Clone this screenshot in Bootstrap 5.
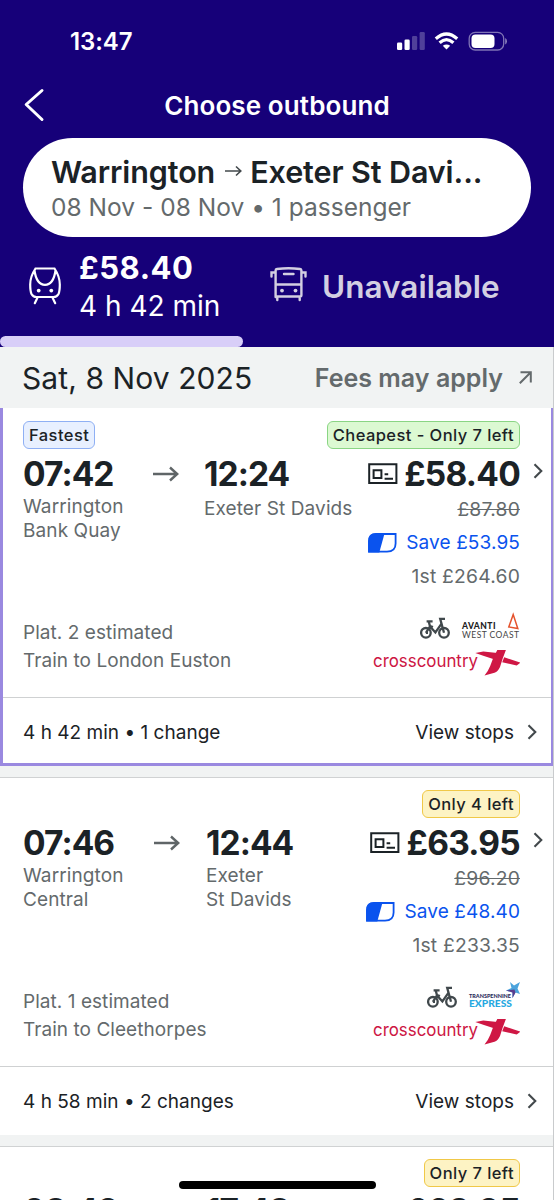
<!DOCTYPE html>
<html lang="en">
<head>
<meta charset="utf-8">
<meta name="viewport" content="width=device-width, initial-scale=1">
<title>Choose outbound</title>
<link href="https://cdn.jsdelivr.net/npm/bootstrap@5.3.0/dist/css/bootstrap.min.css" rel="stylesheet">
<style>
:root{--navy:#160079;--ink:#1b2226;--grey:#646a6c;--lilac:#9a89e0}
html,body{height:1200px;overflow:hidden}
body{font-family:Inter,"Liberation Sans",sans-serif;color:var(--ink);background:#f1f3f3;font-size:19px;line-height:24px;letter-spacing:.02px;white-space:nowrap}
svg{display:block;flex:none;overflow:visible}
.app{height:1200px;overflow:hidden}
.top{background:var(--navy);height:347px;color:#fff}
.status{height:82px;padding:1px 47px 0 70px}
.clock{font-size:24px;font-weight:600;letter-spacing:-.1px}
.titlebar{height:56px}
.titlebar h1{font-size:26px;font-weight:600;line-height:47px;letter-spacing:.1px}
.back{left:24px;top:7px}
.pill{margin:0 23px;height:99px;border-radius:50px;background:#fff;color:var(--ink);padding:15px 28px 0}
.route{font-size:30.5px;font-weight:600;line-height:38px;letter-spacing:-.1px}
.route svg{margin:-2px 8px 0 10px}
.when{font-size:24.5px;line-height:32px;color:var(--grey)}
.modes{height:99px}
.modeA{width:270px;padding:12px 0 0 28px}
.train{margin:18px 18px 0 1px}
.fare{font-size:31px;font-weight:700;line-height:38px;letter-spacing:.5px}
.dur{font-size:28px;line-height:38px;letter-spacing:0}
.modeB{padding-top:30px}
.bus{margin-right:15px}
.una{font-size:31.5px;line-height:40px;font-weight:600;color:#d3cfe2}
.tabline{height:11px;width:243px;border-radius:6px;background:#d8cef8}
.datebar{height:61px;padding:0 22px 0 22px;background:#f1f3f3}
.date{font-size:30px;line-height:62px;letter-spacing:.08px}
.fees{font-size:25px;font-weight:600;color:var(--grey)}
.trip{height:358px;margin-bottom:11px;background:#fff;border-top:1px solid #d0d2d3;padding-top:12px}
.trip.sel{border:3px solid var(--lilac);border-top:0;padding-top:13px}
.trip .inner{height:276px;padding-left:23px}
.trip.sel .inner{padding-left:20px;margin-right:-3px}
.tags{height:28px;padding-right:34px}
.tag{height:28px;border:1.5px solid;border-radius:6px;font-size:16.5px;font-weight:550;line-height:26px;padding:0 5px;letter-spacing:.43px}
.t-blue{background:#e8f0ff;border-color:#8fb0f4}
.t-green{background:#dcf9d2;border-color:#8ad584}
.t-yellow{background:#fdf3c4;border-color:#f0c848}
.hour{font-size:33.5px;font-weight:700;line-height:40px;letter-spacing:-.95px}
.mid{height:152px;padding-top:5px}
.next{padding-top:4px}
.place{padding-top:1px;letter-spacing:.1px}
.place.single{padding-top:3px}
.dep{width:130px}
.arw{width:51px}
.dep.late{width:131px}
.late + .arw{width:52px}
.g{color:var(--grey)}
.price{width:152px}
.price.wide{width:154px}
.price.wide .head{padding-left:4px}
.amt{letter-spacing:-.75px}
.price .old{line-height:30px;height:32px;font-size:19.3px;letter-spacing:.2px}
.price .save{color:#0a53ee;height:34px;letter-spacing:.12px}
.price .first{height:34px;line-height:33px;font-size:19.3px;letter-spacing:.2px}
.go{width:34px;padding:9px 0 0 13px}
.low{height:80px;padding:16px 34px 0 0;line-height:28px}
.plat{padding-top:2px;letter-spacing:.05px}
.op1{height:33px}
.brand{margin:1px 0 0 12px}
.foot{height:69px;border-top:1px solid #cfd1d2;padding:2px 16px 0 23px}
.sel .foot{padding:2px 13px 0 20px}
.fc{margin:-2px 1px 0 13px}
.edge{right:0;top:347px;width:1px;height:853px;background:#c9cbcd}
.home{left:179px;top:1181px;width:197px;height:8px;border-radius:4px;background:#000}
</style>
</head>
<body>
<svg width="0" height="0" class="position-absolute">
<defs>
<symbol id="chev" viewBox="0 0 10 16"><path d="M1.5 1.2 8.3 8 1.5 14.8" fill="none" stroke="#43494c" stroke-width="2.1"/></symbol>
<symbol id="arrow" viewBox="0 0 26 16"><path d="M0 8H24M17 1.5 24.2 8 17 14.5" fill="none" stroke="#5f6567" stroke-width="2.4"/></symbol>
<symbol id="ticket" viewBox="0 0 30 22"><path d="M1.2 1.2H28.4V20H1.2zM5.6 7.2H13.4V15H5.6zM16.6 11.2H20.2M16.6 15.8H25" fill="none" stroke="#1b2226" stroke-width="2"/></symbol>
<symbol id="railcard" viewBox="0 0 29 20"><path d="M8 1H27.6V10.5Q27.6 18.6 19 18.6H1V8Q1 1 8 1Z" fill="#fff" stroke="#0a53ee" stroke-width="1.8"/><path d="M8 .2H16.6L11.3 19.4H.2V8Q.2 .2 8 .2Z" fill="#0a53ee"/></symbol>
<symbol id="bike" viewBox="0 0 30 22"><g fill="none" stroke="#40484c" stroke-width="2.3"><circle cx="5.9" cy="15.8" r="4.8"/><circle cx="24" cy="15.8" r="4.8"/><path d="M5.9 15.8 10 9.4 15.4 15.4 21.2 7.2M5.9 15.8H8M10 9.4 8.8 4.8M6.6 4.4H12.6M10 9 13 10M24 15.8 20.2 1.8H25"/></g></symbol>
<symbol id="xc" viewBox="0 0 147 26"><text x="0" y="16.6" font-family="Inter" font-size="17.5" fill="#cd1643" letter-spacing="0" textLength="105" lengthAdjust="spacingAndGlyphs">crosscountry</text><g fill="#cf1744"><path d="M102.300 3 110.300 1.500 124.500 3 121 9.200Q112 6.500 102.300 3Z"/><path d="M124.300 0 133 -.300 129.700 8.500 127 17Q125 21.500 121.500 22.700L111.500 25.500Q115.500 20.500 117.200 16L120 8.500Z"/><path d="M131.200 7.300 147.300 12.700 143.700 15.500 129.200 12.300Z"/></g></symbol>
</defs>
</svg>
<div class="app position-relative">
<header class="top d-flex flex-column">
  <div class="status d-flex align-items-center justify-content-between">
    <span class="clock">13:47</span>
    <svg width="110" height="19" viewBox="0 0 110 19"><g fill="#fff"><rect x="0" y="10.500" width="5.200" height="7.500" rx="1.300"/><rect x="7.500" y="7.500" width="5.200" height="10.500" rx="1.300"/><rect x="15" y="4" width="5.200" height="14" rx="1.300" opacity=".25"/><rect x="22.600" y="0" width="5.200" height="18" rx="1.300" opacity=".25"/><path d="M49.500 17.500 45.800 13.800Q49.500 11 53.200 13.800Z"/><rect x="74.500" y="2.500" width="23" height="13.500" rx="4"/><path d="M108.200 6V12.500Q110 11.500 110 9.200 110 7 108.200 6Z" opacity=".5"/></g><path d="M38.800 6.800Q49.500-2.800 60.200 6.800M42.600 10.800Q49.500 4.600 56.400 10.800" fill="none" stroke="#fff" stroke-width="3.200"/><rect x="72.200" y=".4" width="34.500" height="17.600" rx="6" fill="none" stroke="#fff" stroke-opacity=".45" stroke-width="1.300"/></svg>
  </div>
  <div class="titlebar position-relative text-center">
    <svg class="back position-absolute" width="20" height="32" viewBox="0 0 20 32"><path d="M18 1.500 2.200 15.500 18 30.500" fill="none" stroke="#fff" stroke-width="3" stroke-linecap="round" stroke-linejoin="round"/></svg>
    <h1 class="m-0">Choose outbound</h1>
  </div>
  <div class="pill">
    <div class="route d-flex align-items-center"><span>Warrington</span><svg width="17" height="12" viewBox="0 0 17 12"><path d="M0 6H15.500M11 1.500 15.800 6 11 10.500" fill="none" stroke="#43494c" stroke-width="1.600"/></svg><span>Exeter St Davi...</span></div>
    <div class="when">08 Nov - 08 Nov • 1 passenger</div>
  </div>
  <div class="modes d-flex">
    <div class="d-flex modeA">
      <svg class="train" width="32" height="38" viewBox="0 0 32 38"><g fill="none" stroke="#fff" stroke-width="2.200" stroke-linecap="round"><path d="M6.500 1.500H25.500Q30.800 9.500 30.800 17.500 30.800 24 29.500 27 28 30 24.500 30H7.500Q4 30 2.500 27 1.200 24 1.200 17.500 1.200 9.500 6.500 1.500ZM5.500 3.500Q7.500 17.800 16 17.800T26.500 3.500M8.300 31 5.800 36.200M23.700 31 26.200 36.200"/></g><g fill="#fff"><circle cx="9.700" cy="23.600" r="1.900"/><circle cx="22.300" cy="23.600" r="1.900"/></g></svg>
      <div><div class="fare">£58.40</div><div class="dur">4 h 42 min</div></div>
    </div>
    <div class="d-flex modeB">
      <svg class="bus" width="37" height="34" viewBox="0 0 37 34"><g fill="none" stroke="#d3cfe2" stroke-width="2.400" stroke-linecap="round"><path d="M5.600 30V3.500Q5.600 2.200 7 2 18.500.400 30 2 31.400 2.200 31.400 3.500V28Q31.400 29.500 30 29.500H7Q5.600 29.500 5.600 28M5.600 17.500H31.400M14 7H23.500M5 5.500H1.500V9.500M32 5.500H35.500V9.500M7.300 30V33M29.700 30V33"/></g><g fill="#d3cfe2"><circle cx="12" cy="23.600" r="1.900"/><circle cx="25.500" cy="23.600" r="1.900"/></g></svg>
      <div class="una">Unavailable</div>
    </div>
  </div>
  <div class="tabline"></div>
</header>
<div class="datebar d-flex align-items-center justify-content-between">
  <span class="date">Sat, 8 Nov 2025</span>
  <span class="fees d-flex align-items-center">Fees may apply<svg class="ms-3" width="13" height="13" viewBox="0 0 13 13"><path d="M.800 12.200 11.800 1.200M1.500 1.200H11.800V11.500" fill="none" stroke="#646a6c" stroke-width="2"/></svg></span>
</div>

<section class="trip sel">
  <div class="inner">
    <div class="tags d-flex justify-content-between"><span class="tag t-blue">Fastest</span><span class="tag t-green">Cheapest - Only 7 left</span></div>
    <div class="mid d-flex">
      <div class="dep"><div class="hour">07:42</div><div class="g place">Warrington<br>Bank Quay</div></div>
      <div class="arw pt-2"><svg class="mt-1" width="26" height="16"><use href="#arrow"/></svg></div>
      <div class="arr"><div class="hour">12:24</div><div class="g place single">Exeter St Davids</div></div>
      <div class="price ms-auto text-end">
        <div class="head d-flex justify-content-between align-items-center"><svg width="30" height="22"><use href="#ticket"/></svg><span class="hour amt">£58.40</span></div>
        <div class="old g"><s>£87.80</s></div>
        <div class="save d-flex justify-content-between align-items-center"><svg width="29" height="20"><use href="#railcard"/></svg><span>Save £53.95</span></div>
        <div class="first g">1st £264.60</div>
      </div>
      <div class="go"><svg width="10" height="16"><use href="#chev"/></svg></div>
    </div>
    <div class="low d-flex justify-content-between">
      <div class="g plat">Plat. 2 estimated<br>Train to London Euston</div>
      <div class="ops">
        <div class="d-flex justify-content-end op1"><svg width="30" height="22"><use href="#bike"/></svg>
        <svg class="brand" width="58" height="24" viewBox="0 0 58 24"><text x="0" y="11.300" font-family="Lato" font-weight="900" font-size="8.500" fill="#222" letter-spacing="0" textLength="33.500">AVANTI</text><text x="0" y="20" font-family="Lato" font-size="8.500" fill="#444" letter-spacing="0" textLength="57">WEST COAST</text><path d="M51.200-3.500 46.800 9 55.800 10.600Z" fill="none" stroke="#e5532d" stroke-width="1.500"/></svg></div>
        <svg width="147" height="26"><use href="#xc"/></svg>
      </div>
    </div>
  </div>
  <div class="foot d-flex align-items-center justify-content-between"><span>4 h 42 min • 1 change</span><span class="d-flex align-items-center">View stops<svg class="fc" width="10" height="16"><use href="#chev"/></svg></span></div>
</section>

<section class="trip">
  <div class="inner">
    <div class="tags d-flex justify-content-end"><span class="tag t-yellow">Only 4 left</span></div>
    <div class="mid d-flex">
      <div class="dep late"><div class="hour">07:46</div><div class="g place">Warrington<br>Central</div></div>
      <div class="arw pt-2"><svg class="mt-1" width="26" height="16"><use href="#arrow"/></svg></div>
      <div class="arr"><div class="hour">12:44</div><div class="g place">Exeter<br>St Davids</div></div>
      <div class="price wide ms-auto text-end">
        <div class="head d-flex justify-content-between align-items-center"><svg width="30" height="22"><use href="#ticket"/></svg><span class="hour amt">£63.95</span></div>
        <div class="old g"><s>£96.20</s></div>
        <div class="save d-flex justify-content-between align-items-center"><svg width="29" height="20"><use href="#railcard"/></svg><span>Save £48.40</span></div>
        <div class="first g">1st £233.35</div>
      </div>
      <div class="go"><svg width="10" height="16"><use href="#chev"/></svg></div>
    </div>
    <div class="low d-flex justify-content-between">
      <div class="g plat">Plat. 1 estimated<br>Train to Cleethorpes</div>
      <div class="ops">
        <div class="d-flex justify-content-end op1"><svg width="30" height="22"><use href="#bike"/></svg>
        <svg class="brand" width="51" height="24" viewBox="0 0 51 24"><text x="0" y="10.500" font-family="Lato" font-weight="900" font-size="6" fill="#2c2c5c" letter-spacing="0" textLength="42" lengthAdjust="spacingAndGlyphs">TRANSPENNINE</text><text x="0" y="19.500" font-family="Lato" font-weight="900" font-size="10" fill="#27a9e1" letter-spacing="0" textLength="43" lengthAdjust="spacingAndGlyphs">EXPRESS</text><path d="M41-5 45-1.500 51-5 48.500 1.500 51 7 46.500 5.500 43.500 11V5.500L37 3.500 42.500 1Z" fill="#4aa3dc"/><path d="M45.500 2.500 46.500 5.500 43.500 11V5.500L37 3.500Z" fill="#5a3c8c"/></svg></div>
        <svg width="147" height="26"><use href="#xc"/></svg>
      </div>
    </div>
  </div>
  <div class="foot d-flex align-items-center justify-content-between"><span>4 h 58 min • 2 changes</span><span class="d-flex align-items-center">View stops<svg class="fc" width="10" height="16"><use href="#chev"/></svg></span></div>
</section>

<section class="trip">
  <div class="inner">
    <div class="tags d-flex justify-content-end"><span class="tag t-yellow">Only 7 left</span></div>
    <div class="mid next d-flex">
      <div class="dep late"><div class="hour">08:49</div></div>
      <div class="arw"></div>
      <div class="arr"><div class="hour">17:48</div></div>
      <div class="price ms-auto text-end"><div class="hour amt">£63.95</div></div>
      <div class="go"></div>
    </div>
  </div>
</section>
<div class="edge position-absolute"></div>
<div class="home position-absolute"></div>
</div>
<script src="https://cdn.jsdelivr.net/npm/bootstrap@5.3.0/dist/js/bootstrap.bundle.min.js"></script>
</body>
</html>
